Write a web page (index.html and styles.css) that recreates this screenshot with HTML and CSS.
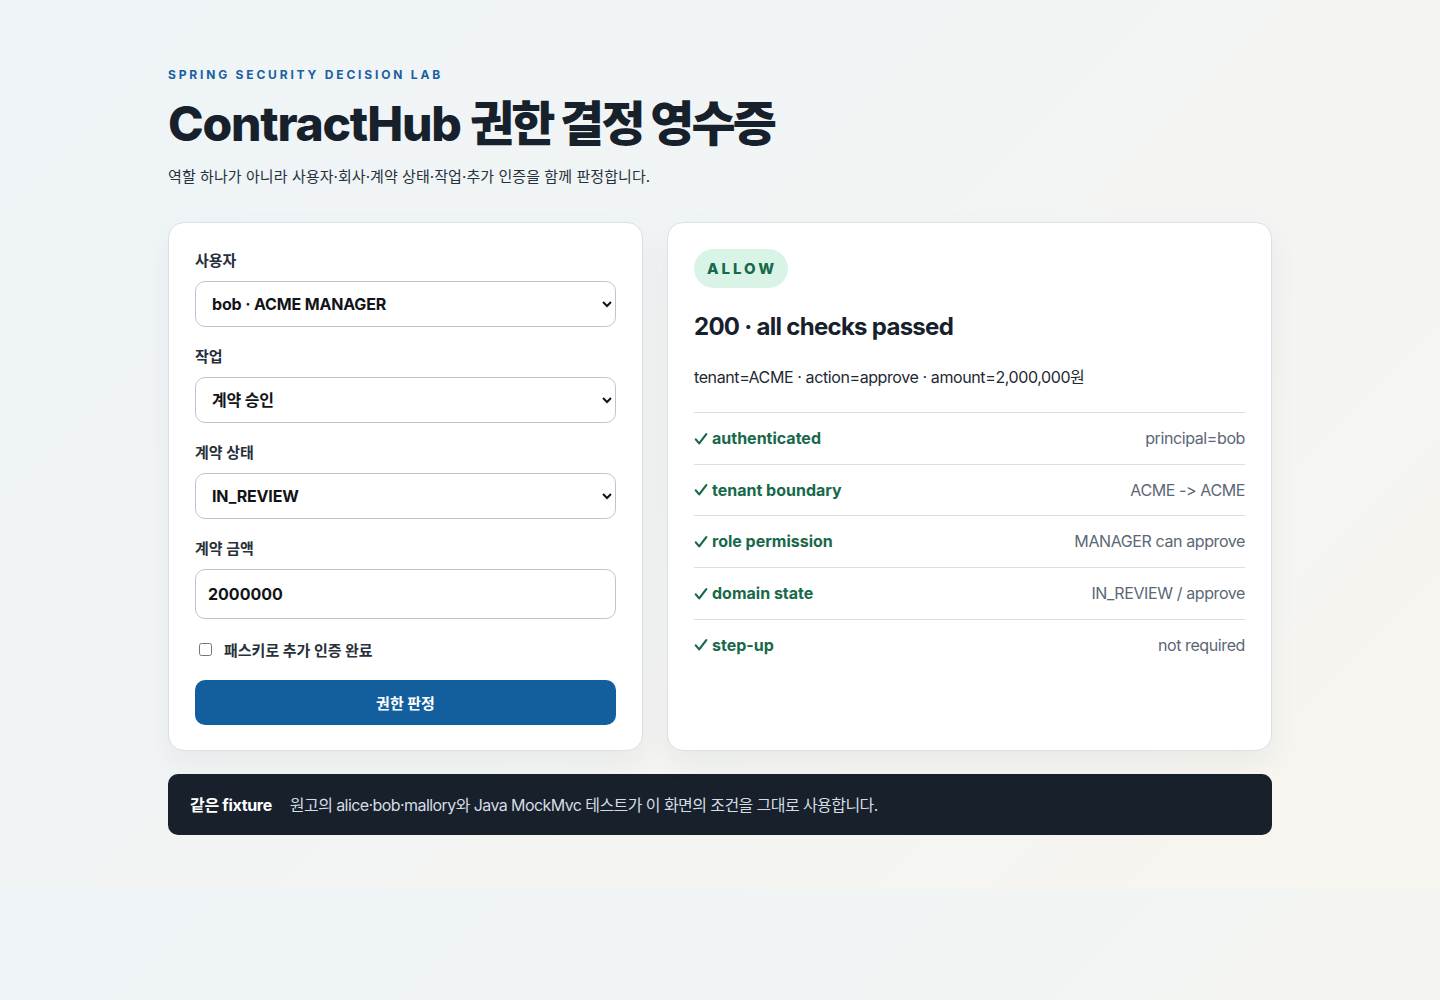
FILE: index.html
```html
<!DOCTYPE html>
<html lang="ko">
<head>
<meta charset="utf-8">
<title>ContractHub 권한 결정 영수증</title>
<link rel="stylesheet" href="styles.css">
</head>
<body>
<main class="page">
  <header class="hero">
    <p class="eyebrow">SPRING SECURITY DECISION LAB</p>
    <h1 class="title">ContractHub <span class="title-ko">권한 결정 영수증</span></h1>
    <p class="lead">역할 하나가 아니라 사용자·회사·계약 상태·작업·추가 인증을 함께 판정합니다.</p>
  </header>

  <section class="grid">
    <form class="card form-card">
      <div class="field">
        <label class="label" for="user">사용자</label>
        <select id="user" class="control select">
          <option>bob · ACME MANAGER</option>
        </select>
      </div>
      <div class="field">
        <label class="label" for="action">작업</label>
        <select id="action" class="control select">
          <option>계약 승인</option>
        </select>
      </div>
      <div class="field">
        <label class="label" for="state">계약 상태</label>
        <select id="state" class="control select">
          <option>IN_REVIEW</option>
        </select>
      </div>
      <div class="field">
        <label class="label" for="amount">계약 금액</label>
        <input id="amount" class="control input" type="text" value="2000000">
      </div>
      <label class="check">
        <input type="checkbox" class="check-box">
        <span>패스키로 추가 인증 완료</span>
      </label>
      <button type="button" class="submit">권한 판정</button>
    </form>

    <article class="card result-card">
      <span class="badge">ALLOW</span>
      <h2 class="result-title">200 · all checks passed</h2>
      <p class="meta">tenant=ACME · action=approve · amount=2,000,000원</p>
      <ul class="checks">
        <li class="check-row"><span class="ok"><svg class="tick" viewBox="0 0 14 14" aria-hidden="true"><path d="M1.8 7.4 L5.2 11.4 L12.3 2.2"/></svg>authenticated</span><span class="detail">principal=bob</span></li>
        <li class="check-row"><span class="ok"><svg class="tick" viewBox="0 0 14 14" aria-hidden="true"><path d="M1.8 7.4 L5.2 11.4 L12.3 2.2"/></svg>tenant boundary</span><span class="detail">ACME -&gt; ACME</span></li>
        <li class="check-row"><span class="ok"><svg class="tick" viewBox="0 0 14 14" aria-hidden="true"><path d="M1.8 7.4 L5.2 11.4 L12.3 2.2"/></svg>role permission</span><span class="detail">MANAGER can approve</span></li>
        <li class="check-row"><span class="ok"><svg class="tick" viewBox="0 0 14 14" aria-hidden="true"><path d="M1.8 7.4 L5.2 11.4 L12.3 2.2"/></svg>domain state</span><span class="detail">IN_REVIEW / approve</span></li>
        <li class="check-row"><span class="ok"><svg class="tick" viewBox="0 0 14 14" aria-hidden="true"><path d="M1.8 7.4 L5.2 11.4 L12.3 2.2"/></svg>step-up</span><span class="detail">not required</span></li>
      </ul>
    </article>
  </section>

  <footer class="note">
    <strong class="note-title">같은 fixture</strong>
    <span class="note-text">원고의 alice·bob·mallory와 Java MockMvc 테스트가 이 화면의 조건을 그대로 사용합니다.</span>
  </footer>
</main>
</body>
</html>
```

FILE: styles.css
```css
* { box-sizing: border-box; }

body {
  margin: 0;
  font-family: Inter, "Noto Sans CJK KR", "Noto Sans", sans-serif;
  font-feature-settings: "calt" 0;
  color: #17212c;
  background: linear-gradient(135deg, #eef4f8 0%, #f7f5ef 100%);
}

.page {
  width: 1104px;
  margin: 0 auto;
  padding: 67px 0 54px;
}

.hero { margin: 0; }

.eyebrow {
  margin: 0;
  font-size: 12px;
  line-height: 16px;
  font-weight: 700;
  letter-spacing: 0.235em;
  color: #1b5f9f;
}

.title {
  margin: 14px 0 0;
  font-size: 48px;
  line-height: 53px;
  font-weight: 800;
  letter-spacing: -0.025em;
  color: #17212c;
}

.title-ko { letter-spacing: -0.06em; }

.lead {
  margin: 16px 0 0;
  font-size: 15px;
  line-height: 22px;
  color: #27313c;
  letter-spacing: 0.005em;
}

.grid {
  margin-top: 34px;
  display: grid;
  grid-template-columns: 475px 1fr;
  gap: 24px;
  align-items: stretch;
}

.card {
  background: #ffffff;
  border: 1px solid #d8e0e8;
  border-radius: 16px;
  box-shadow: 0 12px 30px rgba(23, 33, 44, 0.05);
}

.form-card {
  margin: 0;
  padding: 28px 26px 25px;
  display: flex;
  flex-direction: column;
  gap: 20px;
}

.field {
  display: flex;
  flex-direction: column;
  gap: 10px;
}

.label {
  font-size: 15px;
  line-height: 20px;
  font-weight: 700;
  color: #27313c;
}

.control {
  width: 100%;
  font-family: inherit;
  font-size: 16px;
  font-weight: 700;
  color: #111418;
  background: #ffffff;
  border: 1px solid #b9c5d2;
  border-radius: 10px;
  letter-spacing: -0.01em;
}

.select {
  height: 46px;
  padding: 0 8px 0 12px;
}

.input {
  height: 50px;
  padding: 0 12px;
  letter-spacing: 0;
}

.check {
  display: flex;
  align-items: center;
  gap: 12px;
  height: 21px;
  padding-left: 4px;
  font-size: 15px;
  font-weight: 700;
  color: #27313c;
}

.check-box {
  margin: 0;
  width: 13px;
  height: 13px;
}

.submit {
  height: 45px;
  border: 0;
  border-radius: 10px;
  background: #135f9e;
  color: #ffffff;
  font-family: inherit;
  font-size: 15px;
  font-weight: 700;
}

.result-card {
  padding: 26px;
  display: flex;
  flex-direction: column;
  align-items: flex-start;
}

.badge {
  display: inline-flex;
  align-items: center;
  height: 39px;
  padding: 0 11px 0 13px;
  border-radius: 20px;
  background: #d9f3e7;
  color: #17694a;
  font-size: 15px;
  font-weight: 800;
  letter-spacing: 0.2em;
}

.result-title {
  margin: 24px 0 0;
  font-size: 24px;
  line-height: 30px;
  font-weight: 700;
  letter-spacing: -0.03em;
  color: #17212c;
}

.meta {
  margin: 23px 0 0;
  font-size: 16px;
  line-height: 24px;
  color: #1f2933;
  letter-spacing: -0.025em;
}

.checks {
  list-style: none;
  margin: 23px 0 0;
  padding: 0;
  width: 100%;
}

.check-row {
  display: flex;
  justify-content: space-between;
  align-items: center;
  border-top: 1px solid #d9e0e7;
  padding: 15px 0 14.7px;
  font-size: 16px;
  line-height: 21px;
}

.ok {
  display: inline-flex;
  align-items: center;
  gap: 4px;
  font-weight: 700;
  color: #17694a;
}

.tick {
  width: 14px;
  height: 14px;
  fill: none;
  stroke: currentColor;
  stroke-width: 2.2;
  stroke-linecap: round;
  stroke-linejoin: round;
}

.detail {
  color: #5b6775;
  letter-spacing: -0.025em;
}

.note {
  margin-top: 23px;
  display: flex;
  align-items: center;
  gap: 18px;
  height: 61px;
  padding: 0 22px 2px;
  border-radius: 10px;
  background: #17202b;
  font-size: 16px;
}

.note-title {
  color: #ffffff;
  font-weight: 700;
  letter-spacing: -0.02em;
}

.note-text {
  color: #d5dce4;
  letter-spacing: -0.036em;
}
```
